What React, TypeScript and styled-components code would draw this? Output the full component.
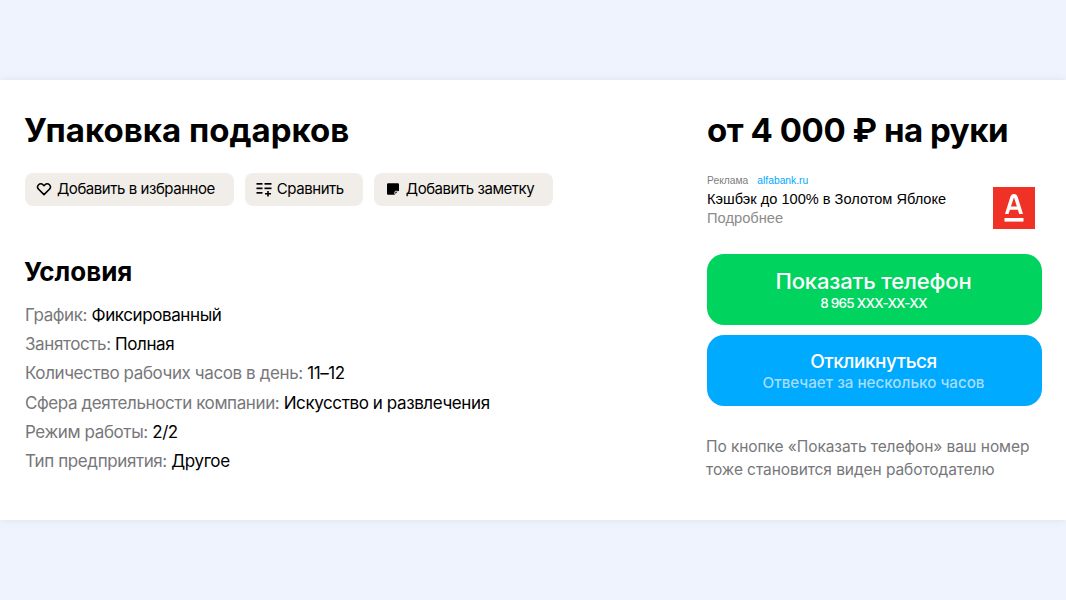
import React from 'react';
import styled, { createGlobalStyle } from 'styled-components';

const GlobalStyle = createGlobalStyle`
  html, body {
    margin: 0;
    padding: 0;
    background: #eff3fd;
    font-family: Inter, "Noto Sans", sans-serif;
  }
`;

const Page = styled.div`
  width: 1066px;
  height: 600px;
  padding-top: 80px;
  box-sizing: border-box;
  overflow: hidden;
`;

const Card = styled.section`
  height: 440px;
  box-sizing: border-box;
  background: #fff;
  box-shadow: 0 0 8px rgba(60, 80, 140, 0.1);
  padding: 29px 24px 0 25px;
  display: flex;
  justify-content: space-between;
`;

const MainColumn = styled.div`
  display: flex;
  flex-direction: column;
`;

const Title = styled.h1`
  margin: 0 0 0 -1px;
  font-size: 33px;
  line-height: 42px;
  font-weight: 700;
  color: #000;
`;

const Actions = styled.div`
  display: flex;
  gap: 11px;
  margin-top: 22px;
`;

const ActionButton = styled.button`
  height: 33px;
  padding: 0 19px 2px 11px;
  display: flex;
  align-items: center;
  gap: 5px;
  border: none;
  border-radius: 8px;
  background: #f1eee9;
  color: #000;
  font-family: inherit;
  font-size: 15px;
  letter-spacing: -0.45px;

  svg {
    flex: none;
  }
`;

const SectionTitle = styled.h2`
  margin: 50px 0 0 -1px;
  font-size: 26px;
  line-height: 32px;
  font-weight: 700;
  color: #000;
`;

const Terms = styled.ul`
  list-style: none;
  margin: 13px 0 0;
  padding: 0;
  font-size: 17px;
  line-height: 29.2px;
  letter-spacing: -0.4px;
  color: #000;
`;

const TermLabel = styled.span`
  color: #77777a;
`;

const SideColumn = styled.aside`
  width: 335px;
  display: flex;
  flex-direction: column;
`;

const Salary = styled.div`
  font-size: 33px;
  line-height: 42px;
  font-weight: 700;
  letter-spacing: -0.45px;
  color: #000;
`;

const Ad = styled.div`
  margin-top: 23px;
  padding-right: 7px;
  display: flex;
  justify-content: space-between;
  align-items: flex-end;
  font-family: "Liberation Sans", Arial, sans-serif;
`;

const AdMeta = styled.div`
  display: flex;
  gap: 9px;
  font-size: 10.3px;
  line-height: 13px;
  color: #808080;
`;

const AdDomain = styled.span`
  color: #00aaff;
`;

const AdHeadline = styled.div`
  margin-top: 3px;
  font-size: 14.6px;
  line-height: 18px;
  color: #000;
`;

const AdMore = styled.div`
  font-size: 14.7px;
  line-height: 20px;
  color: #8c8c8c;
`;

const AdLogo = styled.svg`
  display: block;
  width: 42px;
  height: 42px;
  margin-bottom: -1px;
`;

const CallButton = styled.button<{ $color: string; $top: number }>`
  width: 335px;
  height: 71px;
  margin-top: ${p => p.$top}px;
  padding: 0 2px 0 0;
  border: none;
  border-radius: 17px;
  background: ${p => p.$color};
  color: #fff;
  font-family: inherit;
  display: flex;
  flex-direction: column;
  align-items: center;
  justify-content: center;
`;

const ButtonTitle = styled.span<{ $size: number; $height: number; $tracking: number }>`
  font-size: ${p => p.$size}px;
  line-height: ${p => p.$height}px;
  letter-spacing: ${p => p.$tracking}px;
  font-weight: 500;
`;

const PhoneNote = styled.span`
  font-size: 13.5px;
  line-height: 17px;
  letter-spacing: -0.75px;
  font-weight: 500;
  color: #fff;
`;

const ReplyNote = styled.span`
  font-size: 15.2px;
  line-height: 19px;
  font-weight: 500;
  color: #a6deff;
`;

const Hint = styled.p`
  margin: 29px 0 0 -1px;
  font-size: 15.5px;
  line-height: 23px;
  letter-spacing: -0.08px;
  color: #77777a;
`;

const HeartIcon = () => (
  <svg width="16" height="16" viewBox="0 0 16 16" fill="none" stroke="#000" strokeWidth="1.6" strokeLinejoin="round">
    <path d="M8 13.6 2.6 8.2a3.2 3.2 0 0 1 0-4.5 3.1 3.1 0 0 1 4.4 0L8 4.7l1-1a3.1 3.1 0 0 1 4.4 0 3.2 3.2 0 0 1 0 4.5L8 13.6Z" />
  </svg>
);

const CompareIcon = () => (
  <svg width="16" height="16" viewBox="0 0 16 16" fill="#000">
    <rect x="0.5" y="2" width="6" height="1.7" />
    <rect x="0.5" y="6.5" width="6" height="1.7" />
    <rect x="0.5" y="11" width="6" height="1.7" />
    <rect x="8.5" y="2" width="7" height="1.7" />
    <rect x="8.5" y="6.5" width="7" height="1.7" />
    <path d="M11.2 10h1.6v1.9H15v1.5h-2.2v2.1h-1.6v-2.1H9v-1.5h2.2V10Z" />
  </svg>
);

const NoteIcon = () => (
  <svg width="16" height="16" viewBox="0 0 16 16" fill="#000">
    <path d="M3.2 2.2h9.6a1.2 1.2 0 0 1 1.2 1.2v5.9l-4.5 4.5H3.2A1.2 1.2 0 0 1 2 12.6V3.4a1.2 1.2 0 0 1 1.2-1.2Z" />
    <path d="M9.9 13.2v-2.3a.6.6 0 0 1 .6-.6h2.4" fill="none" stroke="#fff" strokeWidth="0.9" />
  </svg>
);

const AlfaLogo = () => (
  <AdLogo viewBox="0 0 42 42">
    <rect width="42" height="42" fill="#f03226" />
    <rect x="11.5" y="31" width="19" height="3.6" fill="#fff" />
    <path
      fillRule="evenodd"
      d="M21 7c2 0 3 1.100 3.600 2.800L30 27h-3.800l-1.300-4.200h-8l-1.400 4.200H12l5.400-17.200C18 8.100 19 7 21 7Zm-3.100 12.600h6l-2.900-9.200h-.1l-3 9.200Z"
      fill="#fff"
    />
  </AdLogo>
);

const terms: [string, string][] = [
  ['График:', 'Фиксированный'],
  ['Занятость:', 'Полная'],
  ['Количество рабочих часов в день:', '11–12'],
  ['Сфера деятельности компании:', 'Искусство и развлечения'],
  ['Режим работы:', '2/2'],
  ['Тип предприятия:', 'Другое'],
];

const App: React.FC = () => {
  return (
    <Page>
      <GlobalStyle />
      <Card>
        <MainColumn>
          <Title>Упаковка подарков</Title>
          <Actions>
            <ActionButton><HeartIcon />Добавить в избранное</ActionButton>
            <ActionButton><CompareIcon />Сравнить</ActionButton>
            <ActionButton><NoteIcon />Добавить заметку</ActionButton>
          </Actions>
          <SectionTitle>Условия</SectionTitle>
          <Terms>
            {terms.map(([label, value]) => (
              <li key={label}>
                <TermLabel>{label}</TermLabel> {value}
              </li>
            ))}
          </Terms>
        </MainColumn>
        <SideColumn>
          <Salary>от 4 000 ₽ на руки</Salary>
          <Ad>
            <div>
              <AdMeta>
                <span>Реклама</span>
                <AdDomain>alfabank.ru</AdDomain>
              </AdMeta>
              <AdHeadline>Кэшбэк до 100% в Золотом Яблоке</AdHeadline>
              <AdMore>Подробнее</AdMore>
            </div>
            <AlfaLogo />
          </Ad>
          <CallButton $color="#00d45f" $top={26}>
            <ButtonTitle $size={22} $height={27} $tracking={-0.15}>Показать телефон</ButtonTitle>
            <PhoneNote>8 965 XXX-XX-XX</PhoneNote>
          </CallButton>
          <CallButton $color="#00aaff" $top={10}>
            <ButtonTitle $size={19} $height={23} $tracking={-0.45}>Откликнуться</ButtonTitle>
            <ReplyNote>Отвечает за несколько часов</ReplyNote>
          </CallButton>
          <Hint>
            По кнопке «Показать телефон» ваш номер
            <br />
            тоже становится виден работодателю
          </Hint>
        </SideColumn>
      </Card>
    </Page>
  );
};

export default App;
